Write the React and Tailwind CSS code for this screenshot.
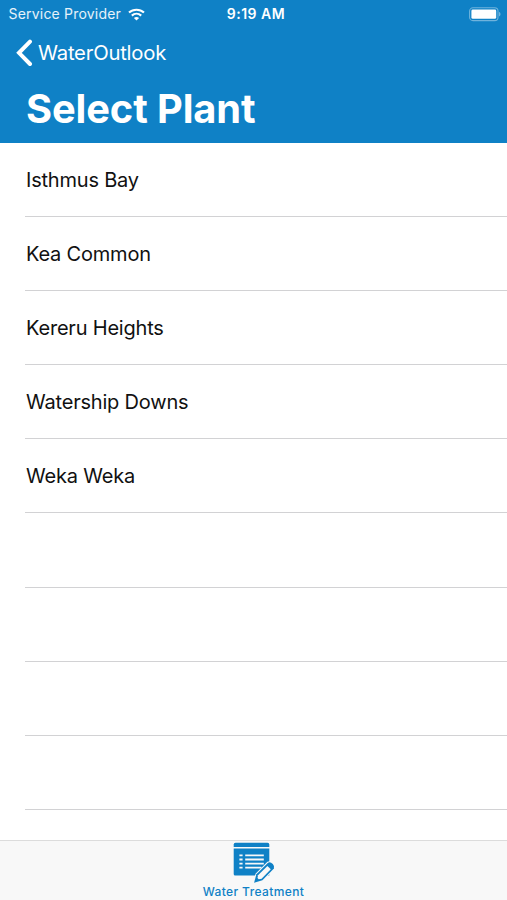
const rows = [
  { id: 1, name: 'Isthmus Bay' },
  { id: 2, name: 'Kea Common' },
  { id: 3, name: 'Kereru Heights' },
  { id: 4, name: 'Watership Downs' },
  { id: 5, name: 'Weka Weka' },
  // Blank rows keep the separators going down to the tab bar
  { id: 6, name: '' },
  { id: 7, name: '' },
  { id: 8, name: '' },
  { id: 9, name: '' },
];

const WifiIcon = () => (
  <svg width="17" height="13" viewBox="0 0 17 13" fill="none" stroke="white" strokeWidth="2.1">
    <path d="M1 4.6C5.2.7 11.8.7 16 4.6" />
    <path d="M3.8 7.6C6.5 5.2 10.5 5.2 13.2 7.6" />
    <path d="M8.5 12.4L5.9 9.9C7.3 8.6 9.7 8.6 11.1 9.9Z" fill="white" stroke="none" />
  </svg>
);

const BatteryIcon = () => (
  <svg width="32" height="15" viewBox="0 0 32 15">
    <rect x="0.6" y="0.8" width="28.4" height="12.8" rx="3.4" fill="none" stroke="white" strokeOpacity="0.4" strokeWidth="1.1" />
    <rect x="2.4" y="2.6" width="24.8" height="9.2" rx="1.4" fill="white" />
    <path d="M30.2 5C31.8 5.6 31.8 8.8 30.2 9.4Z" fill="white" fillOpacity="0.5" />
  </svg>
);

const BackIcon = () => (
  <svg width="18" height="28" viewBox="0 0 18 28" fill="none" stroke="white" strokeWidth="4">
    <path d="M14 2.6L3 13.8L14 25" strokeLinecap="round" />
  </svg>
);

const TreatmentIcon = () => (
  <svg width="48" height="43" viewBox="0 1 48 43">
    <path d="M3.7 7V4.5Q3.7 2.7 5.5 2.7H37.5Q39.3 2.7 39.3 4.5V7Z" fill="#0f81c6" />
    <path d="M3.7 8.4H39.3V35.6H5.2Q3.7 35.6 3.7 34Z" fill="#0f81c6" />
    <g stroke="#f8f8f8" strokeWidth="1.8">
      <path d="M9.4 15.4H12.6M15.2 15.4H33.8" />
      <path d="M9.4 19.5H12.6M15.2 19.5H33.8" />
      <path d="M9.4 23.6H12.6M15.2 23.6H33.8" />
      <path d="M9.4 27.7H12.6M15.2 27.7H31.5" />
    </g>
    <path d="M24.1 42.8L26.4 34.2L38 22.7Q40.3 21.6 42.8 24Q44.8 26.3 43.9 28.4L32.4 40.2Z" fill="#0f81c6" stroke="#f8f8f8" strokeWidth="2" paintOrder="stroke" />
    <path d="M28 35.2L37.4 25.9L40.8 29.3L31.6 38.8L28.7 39.3L27.5 38.1Z" fill="#f8f8f8" />
  </svg>
);

const StatusBar = () => (
  <div className="grid h-7 grid-cols-[1fr_60px_1fr] items-center pl-[8.5px] pr-[6px]">
    <div className="flex items-center gap-[7px]">
      <span className="w-[112px] whitespace-nowrap text-[14px] leading-[18px] tracking-[0.2px] text-white/90">
        Service Provider
      </span>
      <WifiIcon />
    </div>
    <span className="whitespace-nowrap pl-[2px] text-[14px] font-semibold leading-[18px] tracking-[0.5px]">9:19 AM</span>
    <div className="flex justify-end">
      <BatteryIcon />
    </div>
  </div>
);

const Header = () => (
  <header className="h-[143px] bg-[#0f81c6] text-white">
    <StatusBar />
    <div className="flex h-[49px] items-center gap-[4px] pl-[16px]">
      <BackIcon />
      <span className="text-[20.3px] leading-7 tracking-[-0.22px]">WaterOutlook</span>
    </div>
    <h1 className="flex h-[64px] items-center pl-[26px] text-[39.8px] font-bold tracking-[-0.1px]">Select Plant</h1>
  </header>
);

const App = () => {
  return (
    <div className="flex h-[900px] w-[507px] flex-col overflow-hidden bg-white font-['Inter','Liberation_Sans',sans-serif]">
      <Header />
      <ul className="flex-1 overflow-hidden pl-[25px]">
        {rows.map((row) => (
          <li
            key={row.id}
            className="flex h-[74.1px] items-center border-b border-[#d2d2d4] pl-px text-[20px] tracking-[-0.2px] text-[#111]"
          >
            {row.name}
          </li>
        ))}
      </ul>
      <nav className="flex h-[60px] flex-col items-center border-t border-[#dcdcdc] bg-[#f8f8f8] text-[#0f81c6]">
        <TreatmentIcon />
        <span className="text-[12px] font-medium leading-[15px] tracking-[0.4px]">Water Treatment</span>
      </nav>
    </div>
  );
};

export default App;
